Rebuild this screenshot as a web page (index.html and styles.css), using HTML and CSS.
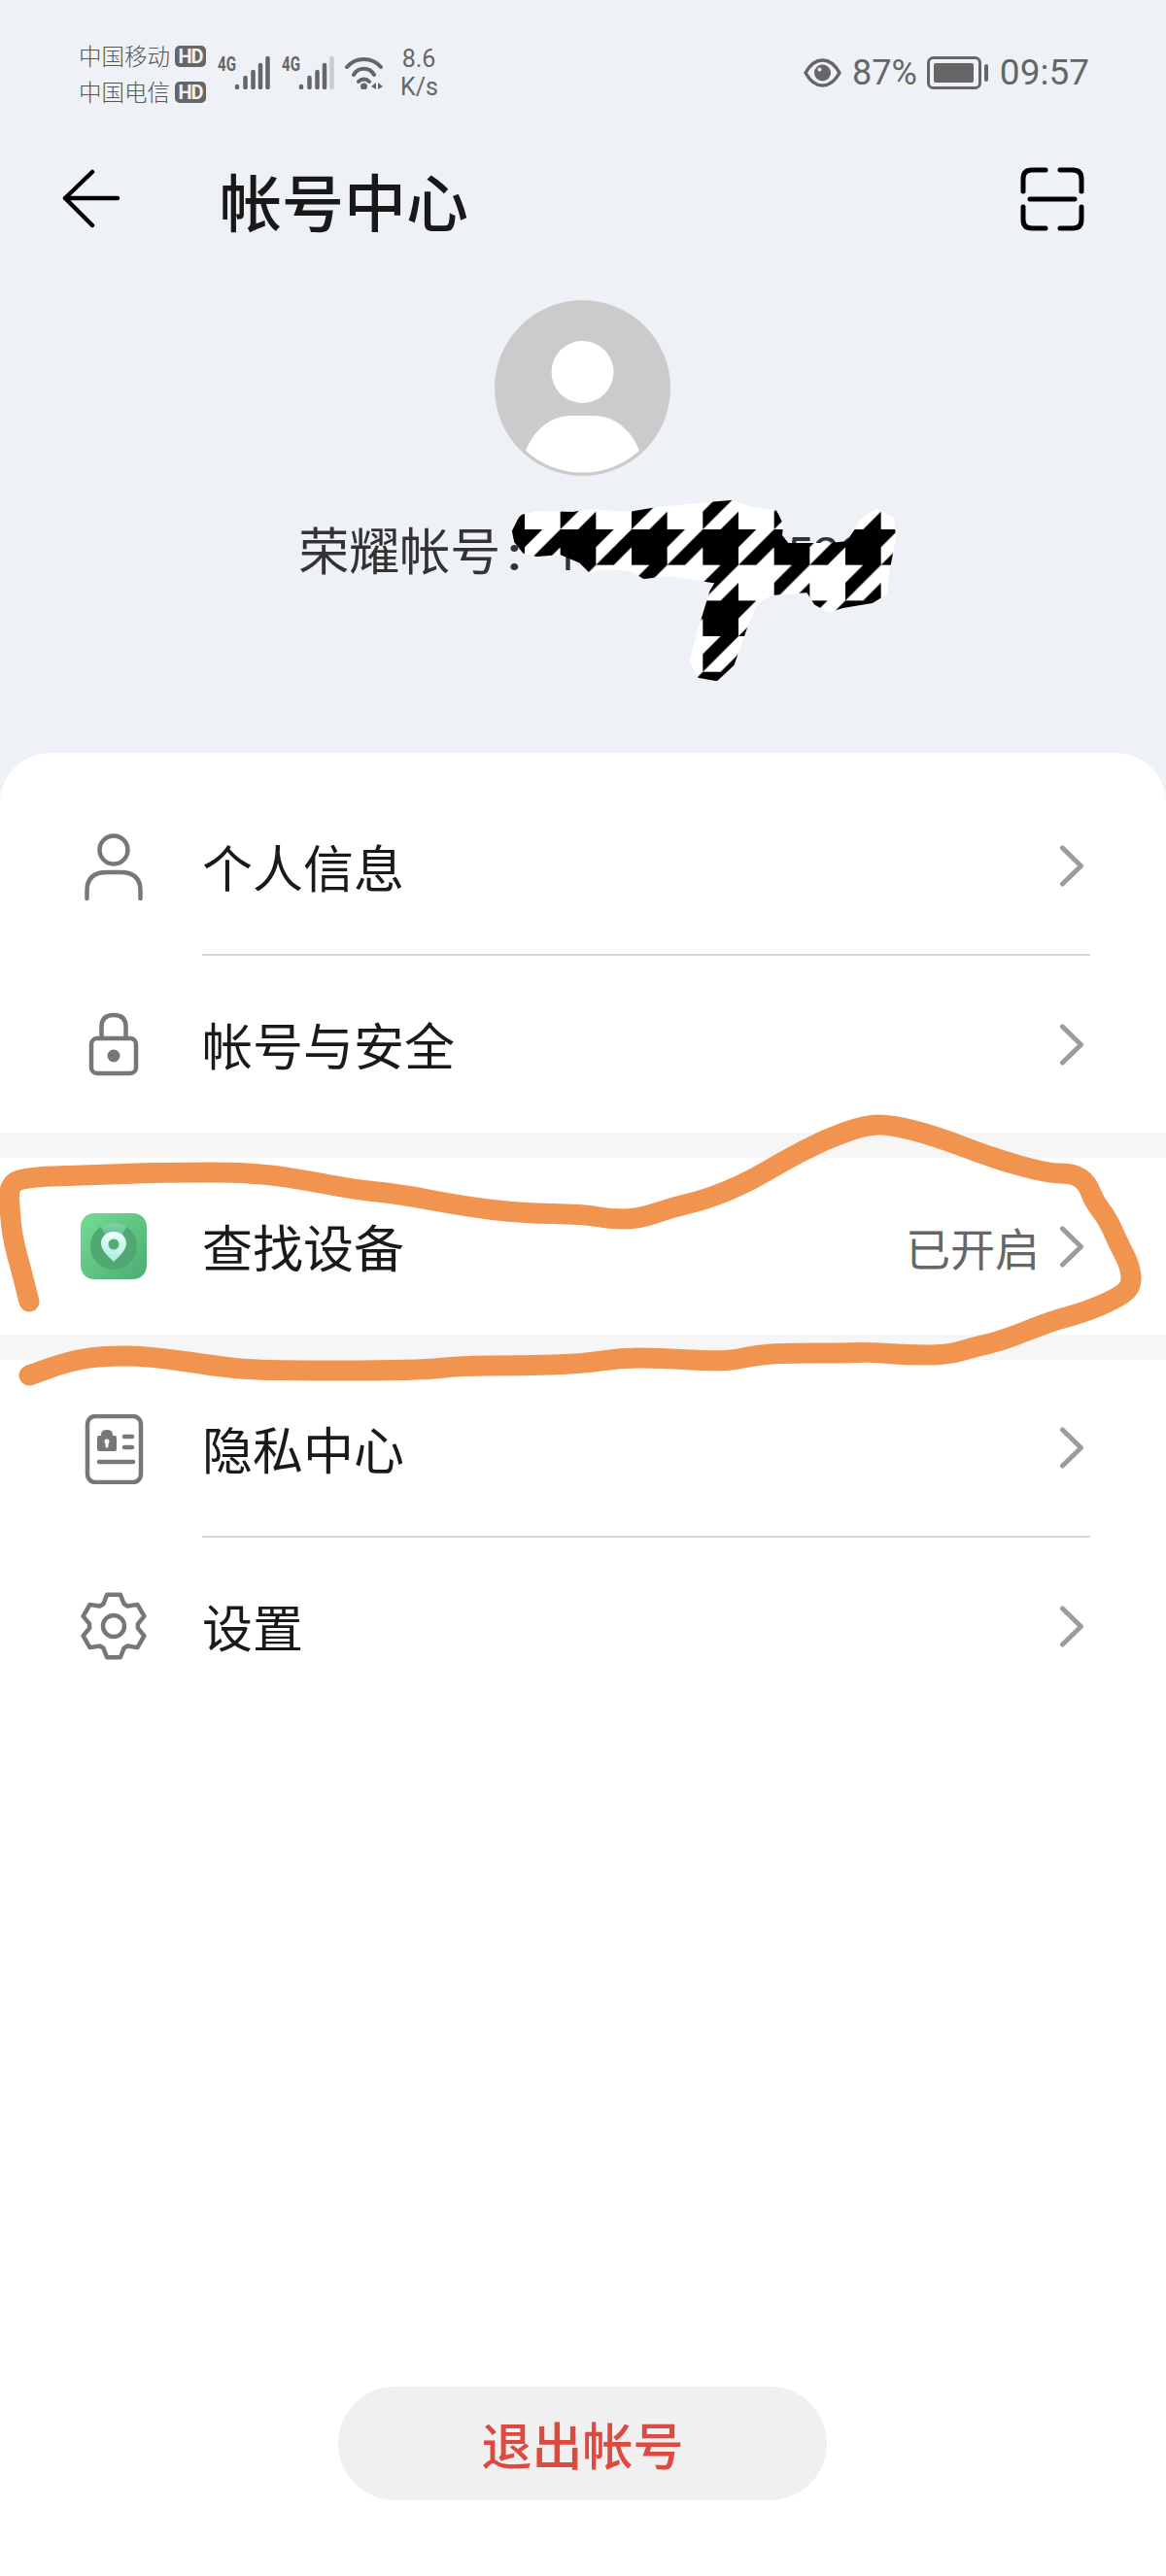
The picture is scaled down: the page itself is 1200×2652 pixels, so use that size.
FILE: index.html
```html
<!DOCTYPE html>
<html lang="zh-CN">
<head>
<meta charset="utf-8" />
<meta name="viewport" content="width=device-width, initial-scale=1" />
<title>帐号中心</title>
<link rel="stylesheet" href="styles.css">
</head>
<body>
<div class="screen">

  <!-- status bar -->
  <div class="status-bar">
    <div class="carriers">
      <div class="carrier"><span>中国移动</span><span class="hd">HD</span></div>
      <div class="carrier"><span>中国电信</span><span class="hd">HD</span></div>
    </div>
    <svg class="signal" viewBox="0 -8 54 42">
      <text x="0" y="15" textLength="19" lengthAdjust="spacingAndGlyphs" class="net">4G</text>
      <g class="bars">
        <path d="M20 31v1M28.5 22v10M36.5 16v16M44 9v23M51.5 2v30"/>
      </g>
    </svg>
    <svg class="signal" viewBox="0 -8 54 42">
      <text x="0" y="15" textLength="19" lengthAdjust="spacingAndGlyphs" class="net">4G</text>
      <g class="bars">
        <path d="M20 31v1M28.5 22v10M36.5 16v16M44 9v23"/>
        <path class="bar-off" d="M51.5 2v30"/>
      </g>
    </svg>
    <svg class="wifi" viewBox="0 0 41 34">
      <path d="M2 11A23 23 0 0 1 37 11M9 19A12 12 0 0 1 30 19M14 26A7.5 7.5 0 0 1 25 26"/>
      <circle cx="19.5" cy="31" r="3.5"/>
      <polygon points="27,31 32,27 32,34"/>
      <polygon points="34,27 34,34 39,31"/>
    </svg>
    <div class="speed"><div>8.6</div><div>K/s</div></div>
    <div class="status-right">
      <svg class="eye" viewBox="0 0 39 30">
        <path d="M2 15C7 6 13 2 19.5 2S32 6 37 15C32 24 26 28 19.5 28S7 24 2 15Z"/>
        <circle cx="19.5" cy="15" r="8.5"/>
        <circle class="eye-glint" cx="16.5" cy="11.5" r="2"/>
      </svg>
      <span class="percent">87%</span>
      <svg class="battery" viewBox="0 0 63 34">
        <rect class="battery-case" x="1.5" y="1.5" width="53" height="31" rx="5"/>
        <rect x="7" y="7" width="41" height="20" rx="2"/>
        <rect x="59" y="8" width="4" height="18" rx="2"/>
      </svg>
      <span class="clock">09:57</span>
    </div>
  </div>

  <!-- toolbar -->
  <div class="toolbar">
    <svg class="back" viewBox="0 0 62 62">
      <path d="M32 3L4 30L32 58M4 30H58"/>
    </svg>
    <h1 class="title">帐号中心</h1>
    <svg class="scan" viewBox="0 0 66 66">
      <path d="M26 3H12Q3 3 3 12V25M41 3H54Q63 3 63 12V25M26 63H12Q3 63 3 54V41M41 63H54Q63 63 63 54V41M10 33H56"/>
    </svg>
  </div>

  <!-- profile -->
  <div class="profile">
    <svg class="avatar" viewBox="0 0 181 181">
      <circle class="avatar-bg" cx="90.5" cy="90.5" r="90.5"/>
      <ellipse cx="90.5" cy="74" rx="32" ry="32"/>
      <path d="M32 155C40 134 58 119 78 119H103C123 119 141 134 149 155A87 87 0 0 1 32 155Z"/>
    </svg>
    <div class="account"><span>荣耀帐号</span><span class="account-colon">:</span><span class="account-num">1</span><span class="account-hidden">••••••••</span><span class="account-tail">520</span></div>
  </div>

  <!-- menu card -->
  <div class="card">
    <div class="group">
      <div class="row line">
        <svg class="row-icon" viewBox="0 0 68 72">
          <circle cx="34" cy="18" r="14.5"/>
          <path d="M6.5 68V60Q6.5 41 27 41H41Q61.5 41 61.5 60V68"/>
        </svg>
        <div class="row-body">
          <span class="row-label">个人信息</span>
          <svg class="chevron" viewBox="0 0 24 43"><path d="M2.5 3L21.5 21.5L2.5 40"/></svg>
        </div>
      </div>
      <div class="row">
        <svg class="row-icon" viewBox="0 0 68 72">
          <rect x="11" y="30" width="46" height="36" rx="6"/>
          <path d="M21.5 30V18Q21.5 6 34 6Q46.5 6 46.5 18V30"/>
          <circle class="solid" cx="34" cy="48" r="6.5"/>
        </svg>
        <div class="row-body">
          <span class="row-label">帐号与安全</span>
          <svg class="chevron" viewBox="0 0 24 43"><path d="M2.5 3L21.5 21.5L2.5 40"/></svg>
        </div>
      </div>
    </div>

    <div class="group">
      <div class="row">
        <svg class="row-app" viewBox="0 0 68 68">
          <defs>
            <linearGradient id="appBg" x1="0" y1="0" x2="1" y2="1">
              <stop offset="0" stop-color="#74dc94"/>
              <stop offset="1" stop-color="#4dac72"/>
            </linearGradient>
            <linearGradient id="appCone" x1="0" y1="0" x2="0" y2="1">
              <stop offset="0" stop-color="#7fd2aa"/>
              <stop offset="1" stop-color="#55ab7b"/>
            </linearGradient>
            <linearGradient id="appPin" x1="0" y1="0" x2="0" y2="1">
              <stop offset="0" stop-color="#f0fffb"/>
              <stop offset="1" stop-color="#a8efe2"/>
            </linearGradient>
            <clipPath id="appDisc"><circle cx="34" cy="34" r="24"/></clipPath>
          </defs>
          <rect width="68" height="68" rx="14" fill="url(#appBg)"/>
          <circle cx="34" cy="34" r="24" fill="#50a873"/>
          <polygon points="34,36 18,10 50,10" fill="url(#appCone)" clip-path="url(#appDisc)"/>
          <path d="M34 50C28 44 21 38 21 31C21 24 27 19 34 19S47 24 47 31C47 38 40 44 34 50Z" fill="url(#appPin)"/>
          <circle cx="34" cy="32" r="5.5" fill="#53ab77"/>
        </svg>
        <div class="row-body">
          <span class="row-label">查找设备</span>
          <span class="row-status">已开启</span>
          <svg class="chevron" viewBox="0 0 24 43"><path d="M2.5 3L21.5 21.5L2.5 40"/></svg>
        </div>
      </div>
    </div>

    <div class="group">
      <div class="row line">
        <svg class="row-icon" viewBox="0 0 68 72">
          <rect x="7" y="2" width="55" height="68" rx="8"/>
          <path class="solid" d="M17 24Q17 22 19 22H21V21Q21 16 27 16Q33 16 33 21V22H35Q37 22 37 24V36Q37 38 35 38H19Q17 38 17 36Z"/>
          <circle class="hole" cx="27" cy="28" r="2.5"/>
          <path class="hole-line" d="M27 28V33"/>
          <path d="M45 23H53M45 34H53M19 49H54"/>
        </svg>
        <div class="row-body">
          <span class="row-label">隐私中心</span>
          <svg class="chevron" viewBox="0 0 24 43"><path d="M2.5 3L21.5 21.5L2.5 40"/></svg>
        </div>
      </div>
      <div class="row">
        <svg class="row-icon" viewBox="0 0 68 72">
          <path d="M23.4 13.3L27.1 3.7H40.9L44.6 13.3L48.3 15.5L58.5 13.9L65.4 25.8L58.9 33.8V38.2L65.4 46.2L58.5 58.1L48.3 56.5L44.6 58.7L40.9 68.3H27.1L23.4 58.7L19.7 56.5L9.5 58.1L2.6 46.2L9.1 38.2V33.8L2.6 25.8L9.5 13.9L19.7 15.5Z"/>
          <circle cx="34" cy="36" r="11"/>
        </svg>
        <div class="row-body">
          <span class="row-label">设置</span>
          <svg class="chevron" viewBox="0 0 24 43"><path d="M2.5 3L21.5 21.5L2.5 40"/></svg>
        </div>
      </div>
    </div>

    <div class="logout-wrap">
      <button class="logout">退出帐号</button>
    </div>
  </div>

  <!-- marks drawn over the screenshot by hand -->
  <svg class="marks" viewBox="0 0 1200 2652">
    <defs>
      <pattern id="houndstooth" patternUnits="userSpaceOnUse" width="2" height="2" patternTransform="translate(723.33 545) scale(36.667)">
        <rect width="2" height="2" fill="#fff"/>
        <rect width="1" height="1" fill="#000"/>
        <polygon points="0.5,2 1,2 1,1.5" fill="#000"/>
        <polygon points="0,2 0,1.5 0.5,1 1,1" fill="#000"/>
        <polygon points="1,0 1.5,0 1,0.5" fill="#000"/>
        <polygon points="1,1 1.5,1 2,0.5 2,0" fill="#000"/>
      </pattern>
    </defs>
    <path class="redact" d="M530 547L537 533L553 529L590 530L607 527L647 530L677 525L727 520L753 518L773 525L797 528L803 540L802 552L810 562L853 562L873 560L882 547L887 537L902 527L917 535L919 552L915 575L912 590L910 610L897 618L867 623L853 627L840 620L832 607L793 610L777 620L767 643L753 683L737 698L720 695L713 680L720 653L733 610L740 598L720 595L687 590L663 593L650 585L620 583L608 587L598 577L577 568L553 570L540 567L532 557Z"/>
    <path class="scribble" d="M30 1340L26.5 1326Q23 1312 18 1293.5Q13 1275 11.5 1260Q10 1245 9.5 1233.5Q9 1222 15.5 1217Q22 1212 55 1211Q88 1210 128 1208.5Q168 1207 216 1207Q264 1207 294.5 1212Q325 1217 346 1221Q367 1225 388 1227Q409 1229 443.5 1235.5Q478 1242 507 1245.5Q536 1249 568 1249.5Q600 1250 613.5 1252.5Q627 1255 642 1255Q657 1255 674.5 1249Q692 1243 709 1239Q726 1235 747 1226.5Q768 1218 787.5 1206.5Q807 1195 828 1184Q849 1173 870 1165.5Q891 1158 904.5 1158Q918 1158 941 1164Q964 1170 992.5 1181Q1021 1192 1049.5 1200Q1078 1208 1091.5 1208Q1105 1208 1112 1213Q1119 1218 1122.5 1227.5Q1126 1237 1133 1246Q1140 1255 1145.5 1267.5Q1151 1280 1157 1291.5Q1163 1303 1164 1314Q1165 1325 1156 1331.5Q1147 1338 1130 1345Q1113 1352 1097.5 1356Q1082 1360 1057 1370Q1032 1380 1017 1383.5Q1002 1387 988.5 1391Q975 1395 954 1395Q933 1395 914 1393.5Q895 1392 881.5 1392.5Q868 1393 837.5 1393Q807 1393 793.5 1394Q780 1395 762.5 1398.5Q745 1402 711 1400Q677 1398 657.5 1398Q638 1398 619 1401Q600 1404 568 1405Q536 1406 505 1406Q474 1406 453 1408.5Q432 1411 350 1411Q268 1411 247 1409Q226 1407 189.5 1401.5Q153 1396 128 1396Q103 1396 86 1399Q69 1402 49.5 1409L30 1416"/>
  </svg>
</div>
</body>
</html>
```

FILE: styles.css
```css
*{box-sizing:border-box;}
body{
  margin:0;
  font-family:'Noto Sans CJK SC',sans-serif;
  color:#1a1a1a;
}
.screen{
  position:relative;
  width:1200px;
  height:2652px;
  overflow:hidden;
  display:flex;
  flex-direction:column;
  background:#eef2f6;
}

/* status bar */
.status-bar{
  display:flex;
  align-items:flex-start;
  height:120px;
  padding:39px 79px 0 81px;
  color:#666;
  font-family:Roboto,'Noto Sans CJK SC',sans-serif;
}
.carriers{width:131px;}
.carrier{
  display:flex;
  align-items:center;
  justify-content:space-between;
  height:37px;
  font-family:'Noto Sans CJK SC',sans-serif;
  font-size:23.5px;
  line-height:37px;
  font-weight:300;
  color:#555;
}
.hd{
  width:32px;
  height:22px;
  border-radius:5px;
  background:#666;
  color:#eef2f6;
  font-family:Roboto,sans-serif;
  font-size:20px;
  font-weight:700;
  line-height:22px;
  text-align:center;
  letter-spacing:-1px;
}
.signal{width:54px;height:42px;margin:11px 0 0 12px;flex:none;}
.signal + .signal{margin-left:12px;}
.net{font-family:Roboto,sans-serif;font-size:20px;font-weight:700;fill:#666;}
.bars path{stroke:#666;stroke-width:4.5;stroke-linecap:round;fill:none;}
.bars .bar-off{stroke:#c9cccf;}
.wifi{width:41px;height:34px;margin:19px 0 0 11px;flex:none;}
.wifi path{fill:none;stroke:#666;stroke-width:4;stroke-linecap:round;}
.wifi circle,.wifi polygon{fill:#666;}
.speed{
  width:38px;
  margin:7px 0 0 16px;
  font-size:25px;
  line-height:29px;
  text-align:center;
  white-space:nowrap;
}
.status-right{
  display:flex;
  align-items:center;
  margin:19px 0 0 auto;
  height:34px;
}
.eye{width:39px;height:30px;}
.eye path{fill:none;stroke:#666;stroke-width:3.5;stroke-linejoin:round;}
.eye circle{fill:#666;}
.eye .eye-glint{fill:#eef2f6;}
.percent{margin-left:11px;font-size:36px;line-height:34px;}
.battery{width:63px;height:34px;margin-left:10px;}
.battery rect{fill:#666;}
.battery .battery-case{fill:none;stroke:#666;stroke-width:3;}
.clock{margin-left:12px;font-size:37px;line-height:34px;}

/* toolbar */
.toolbar{
  display:flex;
  align-items:center;
  height:170px;
  padding:0 84px 0 63px;
}
.back{width:62px;height:62px;flex:none;}
.back path{fill:none;stroke:#000;stroke-width:4.5;stroke-linecap:round;stroke-linejoin:round;}
.title{
  margin:0 0 0 101px;
  font-size:64px;
  font-weight:500;
  line-height:1;
  color:#191919;
}
.scan{width:66px;height:66px;margin-left:auto;flex:none;}
.scan path{fill:none;stroke:#000;stroke-width:5;stroke-linecap:round;}

/* profile */
.profile{
  display:flex;
  flex-direction:column;
  align-items:center;
  height:485px;
  padding:19px 1px 0 0;
}
.avatar{width:181px;height:181px;flex:none;fill:#fff;}
.avatar .avatar-bg{fill:#cbcbcb;}
.account{
  margin-top:45px;
  font-size:52px;
  line-height:60px;
  color:#333;
  white-space:nowrap;
}
.account-colon,.account-num,.account-hidden,.account-tail{font-family:Roboto,sans-serif;font-size:49px;}
.account-colon{margin-left:7px;font-weight:700;}
.account-num{margin-left:33px;}
.account-hidden{letter-spacing:10px;}

/* menu */
.card{
  flex:1;
  display:flex;
  flex-direction:column;
  padding-top:26px;
  background:#fff;
  border-radius:52px 52px 0 0;
}
.group + .group{border-top:26px solid #f6f6f6;}
.row{
  display:flex;
  align-items:center;
  height:182px;
  padding:0 78px 0 83px;
}
.row.line{height:183px;}
.row-icon,.row-app{flex:none;}
.row-icon{width:68px;height:72px;}
.row-icon rect,.row-icon circle,.row-icon path{
  fill:none;
  stroke:#777;
  stroke-width:4.5;
  stroke-linecap:round;
  stroke-linejoin:round;
}
.row-icon .solid{fill:#777;stroke:none;}
.row-icon .hole{fill:#fff;stroke:none;}
.row-icon .hole-line{stroke:#fff;stroke-width:3;}
.row-app{width:68px;height:68px;}
.row-body{
  flex:1;
  align-self:stretch;
  display:flex;
  align-items:center;
  margin-left:57px;
  padding-right:7px;
}
.row.line .row-body{border-bottom:2px solid #d8d8d8;}
.row-label{font-size:52px;line-height:60px;color:#1a1a1a;}
.row-status{margin-left:auto;font-size:46px;line-height:60px;color:#666;}
.chevron{width:24px;height:43px;margin-left:auto;flex:none;}
.row-status + .chevron{margin-left:21px;}
.chevron path{fill:none;stroke:#9c9c9c;stroke-width:5;stroke-linecap:round;stroke-linejoin:round;}

.logout-wrap{
  display:flex;
  justify-content:center;
  margin-top:auto;
  padding:0 1px 78px 0;
}
.logout{
  width:503px;
  height:117px;
  border:none;
  border-radius:59px;
  background:#f1f0f1;
  color:#dd4a40;
  font-family:'Noto Sans CJK SC',sans-serif;
  font-size:52px;
  font-weight:500;
  padding:0;
}

/* hand drawn marks on top */
.marks{position:absolute;left:0;top:0;width:1200px;height:2652px;pointer-events:none;}
.redact{fill:url(#houndstooth);stroke:url(#houndstooth);stroke-width:6;stroke-linejoin:round;}
.scribble{fill:none;stroke:#f09450;stroke-width:21;stroke-linecap:round;stroke-linejoin:round;}
```
